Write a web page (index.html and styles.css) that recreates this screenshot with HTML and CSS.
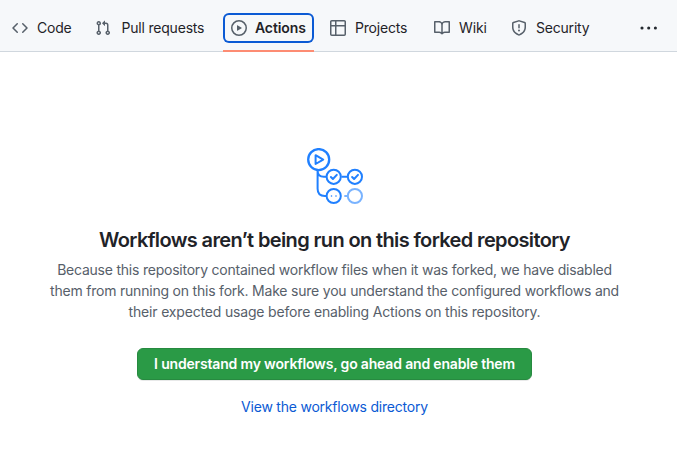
FILE: index.html
```html
<!DOCTYPE html>
<html lang="en">
<head>
<meta charset="utf-8">
<title>Actions</title>
<link rel="stylesheet" href="styles.css">
</head>
<body>
<nav class="nav">
  <a class="tab code"><svg class="icon" viewBox="0 0 16 16"><path d="m11.28 3.22 4.25 4.25a.75.75 0 0 1 0 1.06l-4.25 4.25a.75.75 0 0 1-1.06-1.06L13.94 8l-3.72-3.72a.75.75 0 0 1 1.06-1.06Zm-6.56 0a.75.75 0 0 1 1.06 1.06L2.06 8l3.72 3.72a.75.75 0 0 1-1.06 1.06L.47 8.53a.75.75 0 0 1 0-1.06Z"/></svg><span>Code</span></a>
  <a class="tab pulls"><svg class="icon" viewBox="0 0 16 16"><path d="M1.5 3.25a2.25 2.25 0 1 1 3 2.122v5.256a2.251 2.251 0 1 1-1.5 0V5.372A2.25 2.25 0 0 1 1.5 3.25Zm5.677-.177L9.573.677A.25.25 0 0 1 10 .854V2.5h1A2.5 2.5 0 0 1 13.5 5v5.628a2.251 2.251 0 1 1-1.5 0V5a1 1 0 0 0-1-1h-1v1.646a.25.25 0 0 1-.427.177L7.177 3.427a.25.25 0 0 1 0-.354ZM3.75 2.5a.75.75 0 1 0 0 1.5.75.75 0 0 0 0-1.5Zm0 9.5a.75.75 0 1 0 0 1.5.75.75 0 0 0 0-1.5Zm8.25.75a.75.75 0 1 0 1.5 0 .75.75 0 0 0-1.5 0Z"/></svg><span>Pull requests</span></a>
  <a class="tab actions"><svg class="icon" viewBox="0 0 16 16"><path d="M8 0a8 8 0 1 1 0 16A8 8 0 0 1 8 0ZM1.5 8a6.5 6.5 0 1 0 13 0 6.5 6.5 0 0 0-13 0Zm4.879-2.773 4.264 2.559a.25.25 0 0 1 0 .428l-4.264 2.559A.25.25 0 0 1 6 10.559V5.442a.25.25 0 0 1 .379-.215Z"/></svg><span>Actions</span></a>
  <a class="tab projects"><svg class="icon" viewBox="0 0 16 16"><path d="M0 1.75C0 .784.784 0 1.75 0h12.5C15.216 0 16 .784 16 1.75v12.5A1.75 1.75 0 0 1 14.25 16H1.75A1.75 1.75 0 0 1 0 14.25ZM6.5 6.5v8h7.75a.25.25 0 0 0 .25-.25V6.5Zm8-1.5V1.75a.25.25 0 0 0-.25-.25H6.5V5Zm-13 1.5v7.75c0 .138.112.25.25.25H5v-8ZM5 5V1.5H1.75a.25.25 0 0 0-.25.25V5Z"/></svg><span>Projects</span></a>
  <a class="tab wiki"><svg class="icon" viewBox="0 0 16 16"><path d="M0 1.75A.75.75 0 0 1 .75 1h4.253c1.227 0 2.317.59 3 1.501A3.743 3.743 0 0 1 11.006 1h4.245a.75.75 0 0 1 .75.75v10.5a.75.75 0 0 1-.75.75h-4.507a2.25 2.25 0 0 0-1.591.659l-.622.621a.75.75 0 0 1-1.06 0l-.622-.621A2.25 2.25 0 0 0 5.258 13H.75a.75.75 0 0 1-.75-.75Zm7.251 10.324.004-5.073-.002-2.253A2.25 2.25 0 0 0 5.003 2.5H1.5v9h3.757a3.75 3.75 0 0 1 1.994.574ZM8.755 4.75l-.004 7.322a3.752 3.752 0 0 1 1.992-.572H14.5v-9h-3.495a2.25 2.25 0 0 0-2.25 2.25Z"/></svg><span>Wiki</span></a>
  <a class="tab security"><svg class="icon" viewBox="0 0 16 16"><path d="M7.467.133a1.748 1.748 0 0 1 1.066 0l5.25 1.68A1.75 1.75 0 0 1 15 3.48V7c0 1.566-.32 3.182-1.303 4.682-.983 1.498-2.585 2.813-5.032 3.855a1.697 1.697 0 0 1-1.33 0c-2.447-1.042-4.049-2.357-5.032-3.855C1.32 10.182 1 8.566 1 7V3.48a1.75 1.75 0 0 1 1.217-1.667Zm.61 1.429a.25.25 0 0 0-.153 0l-5.25 1.68a.25.25 0 0 0-.174.238V7c0 1.358.275 2.666 1.057 3.86.784 1.194 2.121 2.34 4.366 3.297a.196.196 0 0 0 .154 0c2.245-.956 3.582-2.104 4.366-3.298C13.225 9.666 13.5 8.36 13.5 7V3.48a.251.251 0 0 0-.174-.237l-5.25-1.68ZM8.75 4.75v3a.75.75 0 0 1-1.5 0v-3a.75.75 0 0 1 1.5 0ZM9 10.5a1 1 0 1 1-2 0 1 1 0 0 1 2 0Z"/></svg><span>Security</span></a>
  <svg class="more" viewBox="0 0 18 4"><circle cx="2" cy="2" r="1.55"/><circle cx="8.7" cy="2" r="1.55"/><circle cx="15.4" cy="2" r="1.55"/></svg>
</nav>
<main class="blank">
  <svg class="art" viewBox="0 0 58 58" fill="none" stroke="#2080ff" stroke-width="2" stroke-linecap="round" stroke-linejoin="round">
    <circle cx="11.7" cy="11.6" r="10.5" stroke-width="2.3"/>
    <path d="M8.6 7.2v8.8l7.6-4.4z"/>
    <path d="M10.6 22.5v18.3q0 7.2 7.2 7.2h1.4M10.6 22.5q0 6.3 6.3 6.3h2.3M34.5 28.8h6" stroke-linecap="butt"/>
    <circle cx="26.7" cy="28.8" r="7.1"/><circle cx="47.9" cy="28.8" r="7.1"/><circle cx="26.7" cy="48" r="7.1"/>
    <path d="m23.9 29 2 2 3.9-4.1M45.1 29l2 2 3.9-4.1"/>
    <path d="M24.5 48h.01M29 48h.01" stroke-width="1.6"/>
    <g stroke="#79b3ff"><circle cx="47.9" cy="48" r="7.1"/><path d="M37.3 48h3.2" stroke-linecap="butt"/></g>
  </svg>
  <h1>Workflows aren’t being run on this forked repository</h1>
  <p><span class="l1">Because this repository contained workflow files when it was forked, we have disabled</span><br><span class="l2">them from running on this fork. Make sure you understand the configured workflows and</span><br><span class="l3">their expected usage before enabling Actions on this repository.</span></p>
  <button>I understand my workflows, go ahead and enable them</button>
  <a class="link">View the workflows directory</a>
</main>
</body>
</html>
```
FILE: styles.css
```css
* { box-sizing: border-box; }
body { margin: 0; background: #fff; color: #1f2328; font: 14px/20px Inter, sans-serif; }
.nav { display: flex; align-items: center; height: 52px; padding: 0 19px 0 4px; background: #f6f8fa; border-bottom: 1px solid #d0d7de; }
.tab { position: relative; display: flex; align-items: center; gap: 9px; height: 30px; margin-top: 5px; padding: 0 8px; white-space: nowrap; letter-spacing: -.2px; }
.icon { width: 16px; height: 16px; flex: none; fill: #57606a; }
.code { width: 83px; }
.pulls { width: 136px; gap: 10.5px; }
.actions { width: 91px; gap: 8px; letter-spacing: -.1px; font-weight: 600; border-radius: 6px; box-shadow: inset 0 0 0 2px #0b5ad4; }
.actions::after { content: ""; position: absolute; left: 0; right: 0; bottom: -9px; height: 2px; background: #fd8c73; }
.projects { margin-left: 8px; width: 104px; }
.wiki { width: 77px; letter-spacing: -.1px; }
.security { width: 100px; }
.more { width: 18px; height: 4px; margin-left: auto; margin-top: 4px; fill: #24292f; }
.blank { display: flex; flex-direction: column; align-items: center; padding-top: 96px; text-align: center; white-space: nowrap; }
.art { width: 58px; height: 58px; margin-right: 5px; }
h1 { margin: 19px 8px 0 0; font-size: 20px; line-height: 30px; font-weight: 600; letter-spacing: -.63px; }
p { margin: 4px 8px 0 0; line-height: 21px; color: #57606a; }
.l1 { letter-spacing: -.225px; }
.l2 { letter-spacing: -.21px; }
.l3 { letter-spacing: -.175px; }
button { width: 395px; height: 32px; margin: 26px 8px 0 0; padding: 0; font: 600 14px/20px Inter, sans-serif; letter-spacing: -.175px; color: #fff; background: #2a9a46; border: 1px solid #278a40; border-radius: 6px; box-shadow: 0 1px 0 #1f23281a; }
.link { margin: 17px 8px 0 0; color: #0b5ad4; letter-spacing: -.22px; }
```
